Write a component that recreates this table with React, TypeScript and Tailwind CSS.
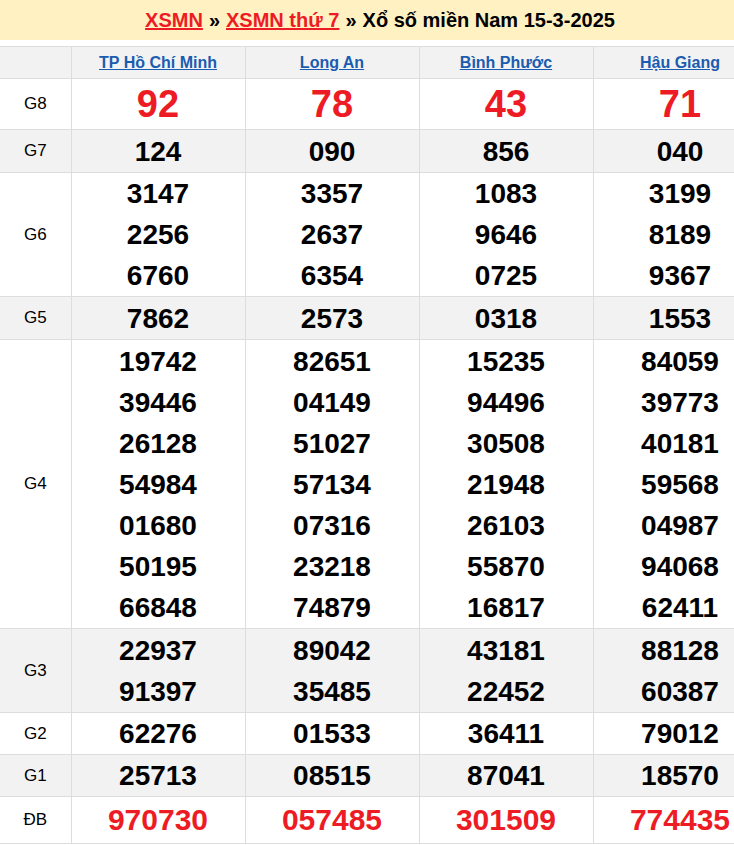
const provinces = ["TP Hồ Chí Minh", "Long An", "Bình Phước", "Hậu Giang"];

type Row = { label: string; values: string[][]; gray?: boolean; kind?: "g8" | "db"; h: string };

const rows: Row[] = [
  { label: "G8", values: [["92"], ["78"], ["43"], ["71"]], kind: "g8", h: "h-[51px]" },
  { label: "G7", values: [["124"], ["090"], ["856"], ["040"]], gray: true, h: "h-[43px]" },
  {
    label: "G6",
    values: [
      ["3147", "2256", "6760"],
      ["3357", "2637", "6354"],
      ["1083", "9646", "0725"],
      ["3199", "8189", "9367"],
    ],
    h: "h-[124px]",
  },
  { label: "G5", values: [["7862"], ["2573"], ["0318"], ["1553"]], gray: true, h: "h-[43px]" },
  {
    label: "G4",
    values: [
      ["19742", "39446", "26128", "54984", "01680", "50195", "66848"],
      ["82651", "04149", "51027", "57134", "07316", "23218", "74879"],
      ["15235", "94496", "30508", "21948", "26103", "55870", "16817"],
      ["84059", "39773", "40181", "59568", "04987", "94068", "62411"],
    ],
    h: "h-[289px]",
  },
  {
    label: "G3",
    values: [
      ["22937", "91397"],
      ["89042", "35485"],
      ["43181", "22452"],
      ["88128", "60387"],
    ],
    gray: true,
    h: "h-[84px]",
  },
  { label: "G2", values: [["62276"], ["01533"], ["36411"], ["79012"]], h: "h-[42px]" },
  { label: "G1", values: [["25713"], ["08515"], ["87041"], ["18570"]], gray: true, h: "h-[42px]" },
  { label: "ĐB", values: [["970730"], ["057485"], ["301509"], ["774435"]], kind: "db", h: "h-[47px]" },
];

const numClass = (kind?: string) => {
  if (kind === "g8") return "text-[38px] leading-[48px] text-[#ed1c24]";
  if (kind === "db") return "text-[30px] leading-[44px] text-[#ed1c24]";
  return "text-[28px] leading-[41px] text-black";
};

export default function App() {
  return (
    <div className="w-[734px] overflow-hidden bg-white font-['Liberation_Sans',Arial,sans-serif]">
      <div className="w-[760px]">
        <div className="h-[40px] bg-[#fff1c2] flex items-center justify-center text-[20px] font-bold text-black">
          <a href="#" className="text-[#ed1c24] underline">XSMN</a>
          <span className="mx-[6px]">»</span>
          <a href="#" className="text-[#ed1c24] underline">XSMN thứ 7</a>
          <span className="mx-[6px]">»</span>
          <span>Xổ số miền Nam 15-3-2025</span>
        </div>
        <table className="mt-[6px] w-[767px] border-collapse table-fixed">
          <colgroup>
            <col className="w-[71px]" />
            <col className="w-[174px]" />
            <col className="w-[174px]" />
            <col className="w-[174px]" />
            <col className="w-[174px]" />
          </colgroup>
          <thead>
            <tr className="h-[32px] bg-[#f2f2f2]">
              <th className="border border-l-0 border-[#dddddd]"></th>
              {provinces.map((p) => (
                <th key={p} className="border border-[#dddddd] text-center p-0">
                  <a href="#" className="text-[16px] font-bold text-[#1a5cb0] underline">{p}</a>
                </th>
              ))}
            </tr>
          </thead>
          <tbody>
            {rows.map((r) => (
              <tr key={r.label} className={`${r.h} ${r.gray ? "bg-[#f2f2f2]" : "bg-white"}`}>
                <td className="border border-l-0 border-[#dddddd] text-center text-[17px] text-black p-0">{r.label}</td>
                {r.values.map((col, i) => (
                  <td key={i} className="border border-[#dddddd] text-center font-bold p-0">
                    {col.map((n, j) => (
                      <div key={j} className={numClass(r.kind)}>{n}</div>
                    ))}
                  </td>
                ))}
              </tr>
            ))}
          </tbody>
        </table>
      </div>
    </div>
  );
}
